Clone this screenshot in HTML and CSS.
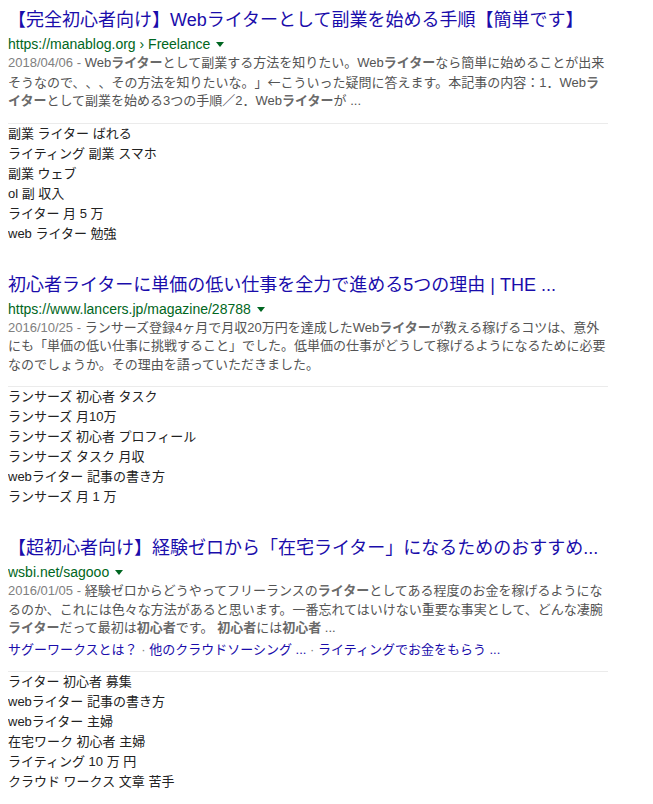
FILE: index.html
```html
<!DOCTYPE html>
<html lang="ja">
<head>
<meta charset="utf-8">
<title>検索結果</title>
<link rel="stylesheet" href="styles.css">
</head>
<body>
<div class="results">
  <div class="result">
    <h3 class="title"><a href="#">【完全初心者向け】Webライターとして副業を始める手順【簡単です】</a></h3>
    <div class="url">https://manablog.org › Freelance<span class="caret"></span></div>
    <div class="snippet"><span class="date">2018/04/06 - </span>Web<b>ライター</b>として副業する方法を知りたい。Web<b>ライター</b>なら簡単に始めることが出来そうなので、、、その方法を知りたいな。」<span class="cjk">←</span>こういった疑問に答えます。本記事の内容：1．Web<b>ライター</b>として副業を始める3つの手順／2．Web<b>ライター</b>が ...</div>
    <ul class="related">
      <li>副業 ライター ばれる</li>
      <li>ライティング 副業 スマホ</li>
      <li>副業 ウェブ</li>
      <li>ol 副 収入</li>
      <li>ライター 月 5 万</li>
      <li>web ライター 勉強</li>
    </ul>
  </div>
  <div class="result">
    <h3 class="title"><a href="#">初心者ライターに単価の低い仕事を全力で進める5つの理由 | THE ...</a></h3>
    <div class="url">https://www.lancers.jp/magazine/28788<span class="caret"></span></div>
    <div class="snippet"><span class="date">2016/10/25 - </span>ランサーズ登録4ヶ月で月収20万円を達成したWeb<b>ライター</b>が教える稼げるコツは、意外にも「単価の低い仕事に挑戦すること」でした。低単価の仕事がどうして稼げるようになるために必要なのでしょうか。その理由を語っていただきました。</div>
    <ul class="related">
      <li>ランサーズ 初心者 タスク</li>
      <li>ランサーズ 月10万</li>
      <li>ランサーズ 初心者 プロフィール</li>
      <li>ランサーズ タスク 月収</li>
      <li>webライター 記事の書き方</li>
      <li>ランサーズ 月 1 万</li>
    </ul>
  </div>
  <div class="result">
    <h3 class="title"><a href="#">【超初心者向け】経験ゼロから「在宅ライター」になるためのおすすめ...</a></h3>
    <div class="url">wsbi.net/sagooo<span class="caret"></span></div>
    <div class="snippet"><span class="date">2016/01/05 - </span>経験ゼロからどうやってフリーランスの<b>ライター</b>としてある程度のお金を稼げるようになるのか、これには色々な方法があると思います。一番忘れてはいけない重要な事実として、どんな凄腕<b>ライター</b>だって最初は<b>初心者</b>です。 <b>初心者</b>には<b>初心者</b> ...</div>
    <div class="sitelinks"><a href="#">サグーワークスとは？</a><span class="dot"> · </span><a href="#">他のクラウドソーシング ...</a><span class="dot"> · </span><a href="#">ライティングでお金をもらう ...</a></div>
    <ul class="related">
      <li>ライター 初心者 募集</li>
      <li>webライター 記事の書き方</li>
      <li>webライター 主婦</li>
      <li>在宅ワーク 初心者 主婦</li>
      <li>ライティング 10 万 円</li>
      <li>クラウド ワークス 文章 苦手</li>
    </ul>
  </div>
</div>
</body>
</html>
```

FILE: styles.css
```css
body {
  margin: 8px;
  background: #fff;
  font-family: "Liberation Sans", Arial, "Noto Sans CJK JP", sans-serif;
  color: #222;
  text-spacing-trim: space-all;
}

.cjk {
  font-family: "Noto Sans CJK JP", sans-serif;
}

.results {
  width: 600px;
}

.result {
  margin-bottom: 29px;
}

.title {
  margin: 0;
  font-size: 18px;
  font-weight: normal;
  line-height: 24px;
  white-space: nowrap;
}

.title a {
  color: #1a0dab;
  text-decoration: none;
}

.url {
  margin-top: 3px;
  font-size: 14px;
  line-height: 18px;
  color: #006621;
}

.caret {
  display: inline-block;
  width: 0;
  height: 0;
  margin-left: 6px;
  border-left: 4px solid transparent;
  border-right: 4px solid transparent;
  border-top: 5px solid #006621;
  vertical-align: 2px;
}

.snippet {
  margin-top: 1px;
  font-size: 13px;
  line-height: 18.5px;
  color: #545454;
}

.snippet b {
  color: #6a6a6a;
  font-weight: bold;
}

.date {
  color: #808080;
}

.sitelinks {
  margin-top: 3px;
  font-size: 13px;
  line-height: 18.5px;
  color: #808080;
}

.sitelinks a {
  color: #1a0dab;
  text-decoration: none;
}

.related {
  list-style: none;
  margin: 12px 0 0;
  padding: 0;
  border-top: 1px solid #ebebeb;
}

.related li {
  font-size: 13px;
  line-height: 20px;
  color: #222;
}
```
